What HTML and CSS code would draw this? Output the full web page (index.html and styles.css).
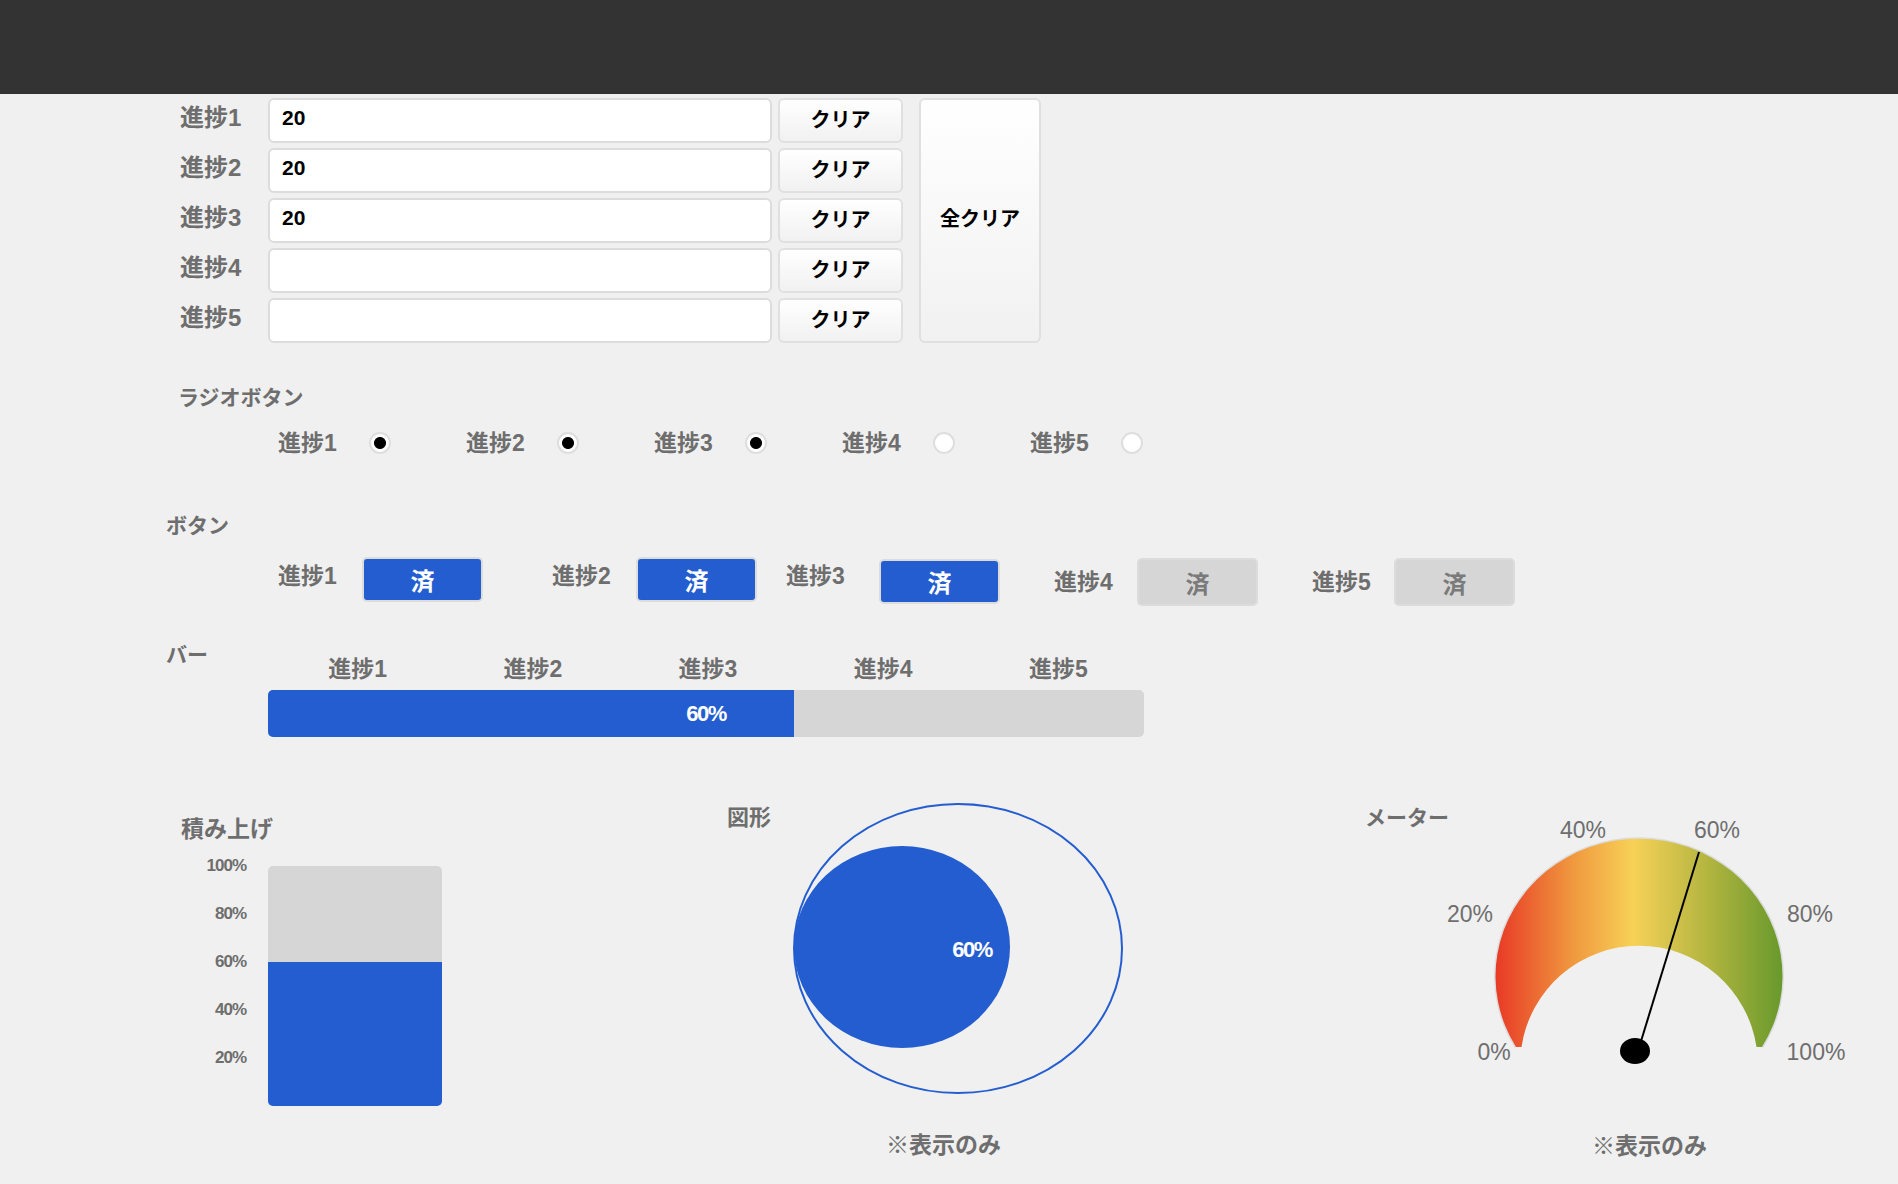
FILE: index.html
```html
<!DOCTYPE html>
<html lang="ja">
<head>
<meta charset="utf-8">
<title>進捗</title>
<link rel="stylesheet" href="styles.css">
</head>
<body>
<header class="topbar"></header>
<main class="page">
  <section class="inputs">
    <div class="rows">
      <div class="row"><label class="row-label">進捗1</label><input class="text-input" type="text" value="20"><button class="clear">クリア</button></div>
      <div class="row"><label class="row-label">進捗2</label><input class="text-input" type="text" value="20"><button class="clear">クリア</button></div>
      <div class="row"><label class="row-label">進捗3</label><input class="text-input" type="text" value="20"><button class="clear">クリア</button></div>
      <div class="row"><label class="row-label">進捗4</label><input class="text-input" type="text" value=""><button class="clear">クリア</button></div>
      <div class="row"><label class="row-label">進捗5</label><input class="text-input" type="text" value=""><button class="clear">クリア</button></div>
    </div>
    <button class="all-clear">全クリア</button>
  </section>

  <section class="radio-section">
    <h2 class="title">ラジオボタン</h2>
    <div class="radio-row">
      <label class="radio-item"><span class="radio-label">進捗1</span><input type="radio" class="radio" checked></label>
      <label class="radio-item"><span class="radio-label">進捗2</span><input type="radio" class="radio" checked></label>
      <label class="radio-item"><span class="radio-label">進捗3</span><input type="radio" class="radio" checked></label>
      <label class="radio-item"><span class="radio-label">進捗4</span><input type="radio" class="radio"></label>
      <label class="radio-item"><span class="radio-label">進捗5</span><input type="radio" class="radio"></label>
    </div>
  </section>

  <section class="button-section">
    <h2 class="title">ボタン</h2>
    <div class="btn-row">
      <div class="btn-item"><span class="btn-label">進捗1</span><button class="done">済</button></div>
      <div class="btn-item"><span class="btn-label">進捗2</span><button class="done">済</button></div>
      <div class="btn-item"><span class="btn-label">進捗3</span><button class="done">済</button></div>
      <div class="btn-item"><span class="btn-label">進捗4</span><button class="done off">済</button></div>
      <div class="btn-item"><span class="btn-label">進捗5</span><button class="done off">済</button></div>
    </div>
  </section>

  <section class="bar-section">
    <h2 class="title bar-title">バー</h2>
    <div class="bar-col">
      <div class="bar-labels">
        <span>進捗1</span><span>進捗2</span><span>進捗3</span><span>進捗4</span><span>進捗5</span>
      </div>
      <div class="bar">
        <div class="bar-fill" style="width:60%"></div>
        <div class="bar-text">60%</div>
      </div>
    </div>
  </section>

  <section class="bottom">
    <div class="col-stack">
      <h2 class="title stack-title">積み上げ</h2>
      <div class="stack">
        <div class="axis">
          <span>100%</span><span>80%</span><span>60%</span><span>40%</span><span>20%</span>
        </div>
        <div class="stack-bar"><div class="stack-fill" style="height:60%"></div></div>
      </div>
    </div>

    <div class="col-figure">
      <div class="fig-row">
        <h2 class="title fig-title">図形</h2>
        <svg class="figure" width="336" height="297" viewBox="0 0 336 297">
          <ellipse cx="168" cy="148.5" rx="164" ry="144.5" fill="none" stroke="#235dd0" stroke-width="2"/>
          <ellipse cx="112" cy="147" rx="108" ry="101" fill="#235dd0"/>
          <text x="182" y="149" class="fig-text" text-anchor="middle" dominant-baseline="central">60%</text>
        </svg>
      </div>
      <p class="caption fig-caption">※表示のみ</p>
    </div>

    <div class="col-meter">
      <div class="meter-row">
        <h2 class="title meter-title">メーター</h2>
        <svg class="gauge" width="420" height="260" viewBox="0 0 420 260">
          <defs>
            <linearGradient id="gg" gradientUnits="userSpaceOnUse" x1="56" y1="0" x2="343" y2="0">
              <stop offset="0" stop-color="#e83a26"/>
              <stop offset="0.27" stop-color="#f0993f"/>
              <stop offset="0.477" stop-color="#f7d156"/>
              <stop offset="0.62" stop-color="#d2c24b"/>
              <stop offset="0.74" stop-color="#b2b53f"/>
              <stop offset="1" stop-color="#67992c"/>
            </linearGradient>
          </defs>
          <path d="M 76 237 A 143.5 137.5 0 1 1 322 237" fill="none" stroke="#dcdcdc" stroke-width="3"/>
          <path d="M 76 237 A 143.5 137.5 0 1 1 322 237 L 316.5 237 A 118.8 118.8 0 0 0 81.5 237 Z" fill="url(#gg)"/>
          <line x1="198" y1="241" x2="259" y2="42" stroke="#000" stroke-width="2"/>
          <ellipse cx="195" cy="241" rx="15" ry="13" fill="#000"/>
          <g class="gauge-labels" text-anchor="middle" dominant-baseline="central">
            <text x="54" y="242">0%</text>
            <text x="30" y="104">20%</text>
            <text x="143" y="20">40%</text>
            <text x="277" y="20">60%</text>
            <text x="370" y="104">80%</text>
            <text x="376" y="242">100%</text>
          </g>
        </svg>
      </div>
      <p class="caption meter-caption">※表示のみ</p>
    </div>
  </section>
</main>
</body>
</html>
```

FILE: styles.css
```css
* { box-sizing: border-box; }

body {
  margin: 0;
  background: #f0f0f0;
  font-family: "Liberation Sans", "Noto Sans CJK JP", sans-serif;
  color: #6e6e6e;
}

.topbar {
  height: 94px;
  background: #333333;
}

.title {
  margin: 0;
  font-size: 21px;
  line-height: 30px;
  font-weight: 700;
  color: #6e6e6e;
  white-space: nowrap;
}

/* ---------- inputs ---------- */
.inputs {
  display: flex;
  align-items: flex-start;
  gap: 16px;
  margin: 4px 0 0 180px;
}

.rows {
  display: flex;
  flex-direction: column;
  gap: 5px;
}

.row {
  display: flex;
  align-items: center;
  height: 45px;
}

.row-label {
  width: 88px;
  font-size: 24px;
  line-height: 30px;
  font-weight: 700;
  padding-bottom: 6px;
}

.text-input {
  width: 504px;
  height: 45px;
  border: 2px solid #dcdcdc;
  border-radius: 6px;
  background: #fff;
  padding: 0 12px 6px;
  font-family: "Liberation Sans", sans-serif;
  font-size: 21px;
  font-weight: 700;
  color: #000;
  outline: none;
}

.clear,
.all-clear {
  font-family: inherit;
  font-size: 20px;
  font-weight: 700;
  color: #000;
  border: 2px solid #e0e0e0;
  border-radius: 6px;
  background: linear-gradient(#ffffff, #f1f1f1);
  padding: 0 0 4px;
}

.clear {
  margin-left: 6px;
  width: 125px;
  height: 45px;
}

.all-clear {
  width: 122px;
  height: 245px;
  padding-bottom: 7px;
}

/* ---------- radios ---------- */
.radio-section {
  margin: 40px 0 0 178px;
}

.radio-row {
  display: flex;
  margin: 15px 0 0 100px;
}

.radio-item {
  display: flex;
  align-items: center;
  width: 188px;
  height: 30px;
}

.radio-label {
  width: 91px;
  font-size: 23px;
  line-height: 30px;
  font-weight: 700;
}

.radio {
  appearance: none;
  -webkit-appearance: none;
  margin: 0;
  width: 22px;
  height: 22px;
  border: 2px solid #dedede;
  border-radius: 50%;
  background: #fff;
}

.radio:checked {
  background: radial-gradient(circle, #000 0 5.5px, #fff 6.5px);
}

/* ---------- buttons ---------- */
.button-section {
  margin: 53px 0 0 166px;
}

.btn-row {
  display: flex;
  align-items: flex-start;
  margin: 16px 0 0 112px;
}

.btn-item {
  display: flex;
  align-items: flex-start;
  gap: 24px;
}

.btn-label {
  width: 60px;
  font-size: 23px;
  line-height: 30px;
  font-weight: 700;
  margin-top: 4px;
  white-space: nowrap;
}

.done {
  width: 121px;
  height: 45px;
  border: 2px solid #dcdcdc;
  border-radius: 5px;
  background: #235dd0;
  color: #fff;
  font-family: inherit;
  font-size: 24px;
  font-weight: 700;
  padding: 0;
}

.done.off {
  height: 48px;
  margin-top: 1px;
  background: #d6d6d6;
  color: #7a7a7a;
}

.btn-item:nth-child(2) { margin-left: 69px; }
.btn-item:nth-child(3) { margin-left: 29px; gap: 33px; }
.btn-item:nth-child(3) .done { margin-top: 2px; }
.btn-item:nth-child(4) { margin-left: 54px; gap: 23px; }
.btn-item:nth-child(5) { margin-left: 54px; gap: 22px; }
.btn-item:nth-child(4) .btn-label,
.btn-item:nth-child(5) .btn-label { margin-top: 10px; }

/* ---------- bar ---------- */
.bar-section {
  display: flex;
  align-items: flex-start;
  margin: 34px 0 0 166px;
}

.bar-title {
  width: 102px;
}

.bar-col {
  width: 876px;
  padding-top: 14px;
}

.bar-labels {
  display: flex;
}

.bar-labels span {
  flex: 1;
  text-align: center;
  padding-left: 4px;
  font-size: 23px;
  line-height: 30px;
  font-weight: 700;
}

.bar {
  display: grid;
  margin-top: 6px;
  height: 47px;
  border-radius: 5px;
  background: #d6d6d6;
  overflow: hidden;
}

.bar > * {
  grid-area: 1 / 1;
}

.bar-fill {
  height: 100%;
  background: #235dd0;
}

.bar-text {
  place-self: center;
  color: #fff;
  font-size: 22px;
  font-weight: 700;
  letter-spacing: -1.5px;
}

/* ---------- bottom ---------- */
.bottom {
  display: flex;
  align-items: flex-start;
  margin: 63px 0 0 181px;
}

.col-stack {
  width: 546px;
  flex-shrink: 0;
}

.stack-title {
  margin-top: 14px;
  font-size: 23px;
}

.stack {
  display: flex;
  align-items: flex-start;
  margin-top: 22px;
}

.axis {
  display: flex;
  flex-direction: column;
  width: 65px;
  margin-top: -12px;
}

.axis span {
  height: 48px;
  line-height: 24px;
  text-align: right;
  font-size: 17px;
  font-weight: 700;
  letter-spacing: -1px;
}

.stack-bar {
  display: flex;
  flex-direction: column;
  justify-content: flex-end;
  margin-left: 22px;
  width: 174px;
  height: 240px;
  border-radius: 5px;
  background: #d6d6d6;
  overflow: hidden;
}

.stack-fill {
  background: #235dd0;
}

.col-figure {
  width: 638px;
  flex-shrink: 0;
}

.fig-row,
.meter-row {
  display: flex;
  align-items: flex-start;
}

.fig-title {
  width: 63px;
  flex-shrink: 0;
  margin-top: 3px;
  font-size: 22px;
}

.figure {
  display: block;
  flex-shrink: 0;
}

.fig-text {
  fill: #fff;
  font-family: "Liberation Sans", sans-serif;
  font-size: 22px;
  font-weight: 700;
  letter-spacing: -1.5px;
}

.caption {
  margin: 0;
  font-size: 23px;
  line-height: 30px;
  font-weight: 700;
}

.fig-caption {
  margin: 33px 0 0 159px;
}

.meter-title {
  width: 75px;
  flex-shrink: 0;
  margin-top: 3px;
  font-size: 21px;
}

.gauge {
  display: block;
  flex-shrink: 0;
  margin-top: 10px;
}

.gauge-labels text {
  fill: #6e6e6e;
  font-family: "Liberation Sans", sans-serif;
  font-size: 23px;
}

.meter-caption {
  margin: 61px 0 0 227px;
}
```
